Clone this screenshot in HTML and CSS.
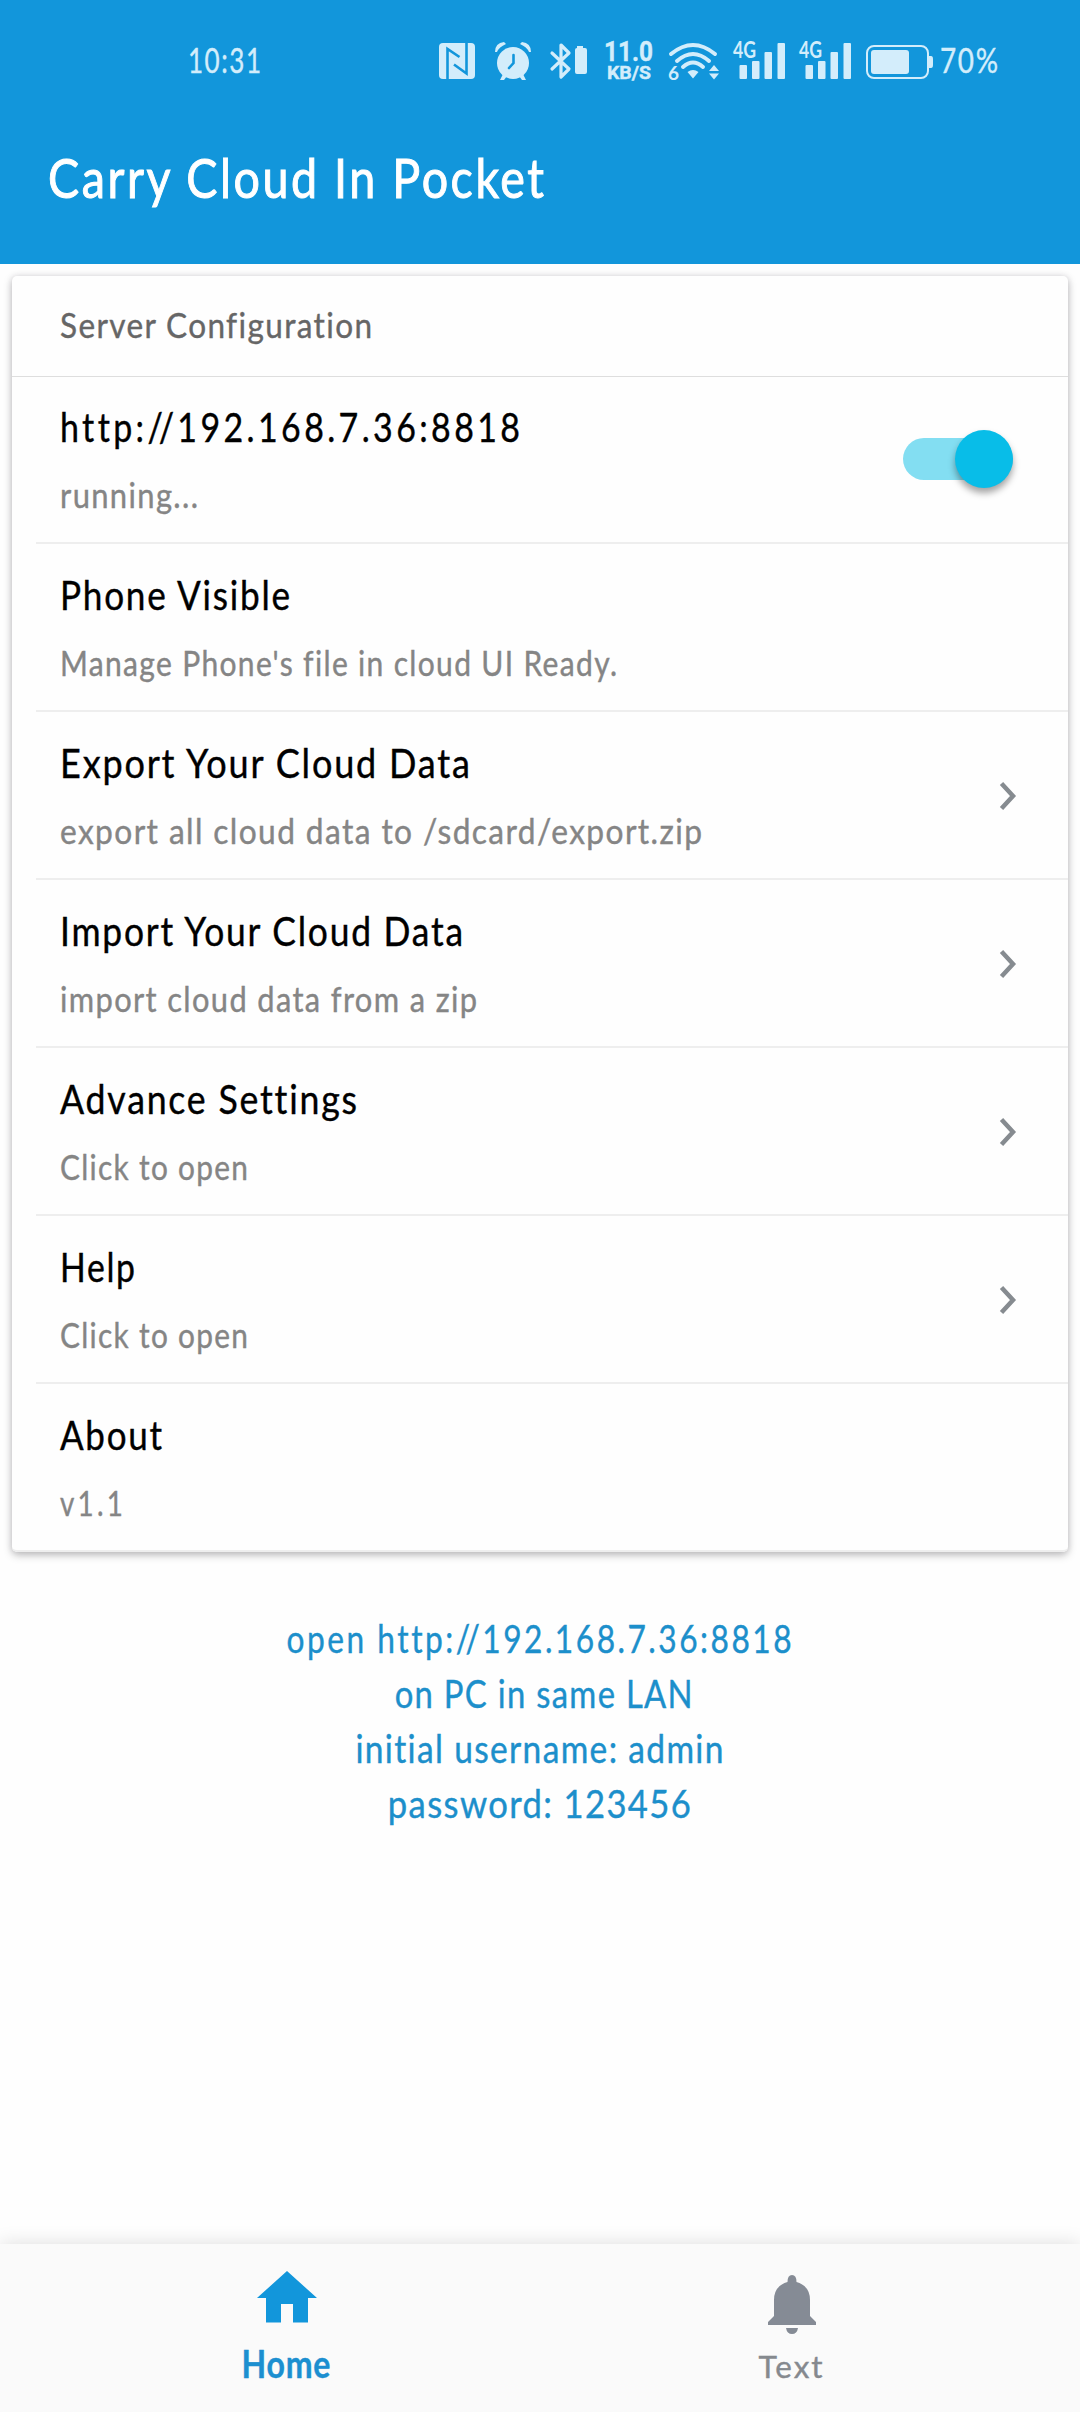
FILE: index.html
```html
<!DOCTYPE html>
<html lang="en">
<head>
<meta charset="utf-8">
<title>Carry Cloud In Pocket</title>
<link rel="stylesheet" href="styles.css">
</head>
<body>
<div class="screen">
  <header class="appbar">
    <div class="status">
      <span class="clock" data-fit="71">10:31</span>
      <div class="status-icons">
        <svg class="nfc" width="36" height="38" viewBox="0 0 36 38"><rect y="1" width="36" height="36" rx="4" fill="currentColor"/><path d="M8.500 37V7L20.500 15M27.500 1V31.500L15 22.500" fill="none" stroke="#1296db" stroke-width="2.600"/></svg>
        <svg class="alarm" width="38" height="38" viewBox="0 0 38 38"><circle cx="19" cy="21" r="16" fill="currentColor"/><path d="M1 10Q1 1 10 0L12 2Q5 5 3 10ZM37 10Q37 1 28 0L26 2Q33 5 35 10ZM9 32L6 38H10L13 34ZM29 32L32 38H28L25 34Z" fill="currentColor"/><path d="M19.500 13V21L15 26" fill="none" stroke="#1296db" stroke-width="2.600" stroke-linecap="round"/></svg>
        <svg class="bluetooth" width="37" height="38" viewBox="0 0 37 38"><path d="M2 11L19 27L11 35V3L19 11L2 27" fill="none" stroke="currentColor" stroke-width="3.200" stroke-linecap="round" stroke-linejoin="round"/><path d="M27 4H33V6H35Q37 6 37 8V30Q37 32 35 32H27Q25 32 25 30V8Q25 6 27 6Z" fill="currentColor"/></svg>
        <div class="speed"><span data-fit="47">11.0</span><small data-fit="42">KB/S</small></div>
        <svg class="wifi" width="52" height="38" viewBox="0 0 52 38"><g fill="none" stroke="currentColor" stroke-width="4" stroke-linecap="round"><path d="M3 12Q25 -6 47 12"/><path d="M9 19Q25 5 41 19"/><path d="M15 25Q25 16 35 25"/></g><path d="M19.500 30Q25 26 30.500 30L25 36.500ZM41 29L46 23L51 29ZM41 31.500H51L46 37.500Z" fill="currentColor"/><text x="0" y="37.500" font-size="19" font-weight="700" fill="currentColor">6</text></svg>
        <svg class="signal" width="52" height="38" viewBox="0 0 52 38"><text x="0" y="16" font-size="22" font-weight="700" textLength="23" lengthAdjust="spacingAndGlyphs" fill="currentColor">4G</text><g fill="currentColor"><rect x="6.500" y="23" width="7.500" height="14" rx="1"/><rect x="19" y="19" width="7.500" height="18" rx="1"/><rect x="31.500" y="10" width="7.500" height="27" rx="1"/><rect x="44.500" y="1" width="7.500" height="36" rx="1"/></g></svg>
        <svg class="signal" width="52" height="38" viewBox="0 0 52 38"><text x="0" y="16" font-size="22" font-weight="700" textLength="23" lengthAdjust="spacingAndGlyphs" fill="currentColor">4G</text><g fill="currentColor"><rect x="6.500" y="23" width="7.500" height="14" rx="1"/><rect x="19" y="19" width="7.500" height="18" rx="1"/><rect x="31.500" y="10" width="7.500" height="27" rx="1"/><rect x="44.500" y="1" width="7.500" height="36" rx="1"/></g></svg>
        <svg class="battery" width="67" height="38" viewBox="0 0 67 38"><rect x="1" y="4" width="61" height="32" rx="7" fill="none" stroke="currentColor" stroke-width="2"/><rect x="5" y="8" width="38" height="24" rx="3" fill="currentColor"/><path d="M63 14H65Q67 14 67 17V23Q67 26 65 26H63Z" fill="currentColor"/></svg>
        <span class="percent" data-fit="56">70%</span>
      </div>
    </div>
    <h1 class="title"><span data-fit="494">Carry Cloud In Pocket</span></h1>
  </header>

  <main class="content">
    <section class="card">
      <h2 class="card-head"><span data-fit="310">Server Configuration</span></h2>
      <div class="row">
        <div class="row-text"><span class="name url" data-fit="458">http://192.168.7.36:8818</span><span class="note" data-fit="136">running...</span></div>
        <div class="switch"><div class="knob"></div></div>
      </div>
      <div class="row">
        <div class="row-text"><span class="name" data-fit="228">Phone Visible</span><span class="note" data-fit="555">Manage Phone's file in cloud UI Ready.</span></div>
      </div>
      <div class="row">
        <div class="row-text"><span class="name" data-fit="408">Export Your Cloud Data</span><span class="note" data-fit="640">export all cloud data to /sdcard/export.zip</span></div>
        <svg class="chevron" width="18" height="30" viewBox="0 0 18 30"><path d="M2.500 3.500L14 16L2.500 28.500" fill="none" stroke="currentColor" stroke-width="4.500"/></svg>
      </div>
      <div class="row">
        <div class="row-text"><span class="name" data-fit="401">Import Your Cloud Data</span><span class="note" data-fit="415">import cloud data from a zip</span></div>
        <svg class="chevron" width="18" height="30" viewBox="0 0 18 30"><path d="M2.500 3.500L14 16L2.500 28.500" fill="none" stroke="currentColor" stroke-width="4.500"/></svg>
      </div>
      <div class="row">
        <div class="row-text"><span class="name" data-fit="295">Advance Settings</span><span class="note" data-fit="186">Click to open</span></div>
        <svg class="chevron" width="18" height="30" viewBox="0 0 18 30"><path d="M2.500 3.500L14 16L2.500 28.500" fill="none" stroke="currentColor" stroke-width="4.500"/></svg>
      </div>
      <div class="row">
        <div class="row-text"><span class="name" data-fit="73">Help</span><span class="note" data-fit="186">Click to open</span></div>
        <svg class="chevron" width="18" height="30" viewBox="0 0 18 30"><path d="M2.500 3.500L14 16L2.500 28.500" fill="none" stroke="currentColor" stroke-width="4.500"/></svg>
      </div>
      <div class="row">
        <div class="row-text"><span class="name" data-fit="100">About</span><span class="note wide" data-fit="61">v1.1</span></div>
      </div>
    </section>

    <div class="hint">
      <span class="url" data-fit="503">open http://192.168.7.36:8818</span>
      <span class="lan" data-fit="296">on PC in same LAN</span>
      <span data-fit="366">initial username: admin</span>
      <span data-fit="301">password: 123456</span>
    </div>
  </main>

  <nav class="tabs">
    <a class="tab active">
      <svg width="60" height="52" viewBox="0 0 60 52"><path d="M30 0L60 27H51V51.500H36V33H24V51.500H9V27H0Z" fill="currentColor"/></svg>
      <span data-fit="87">Home</span>
    </a>
    <a class="tab">
      <svg width="48" height="60" viewBox="0 0 48 60"><path d="M24 0Q28.500 0 28.500 7Q42 11 42 25V41L48 47V50H0V47L6 41V25Q6 11 19.500 7Q19.500 0 24 0ZM18 53H30Q29 59 24 59Q19 59 18 53Z" fill="currentColor"/></svg>
      <span data-fit="62">Text</span>
    </a>
  </nav>
</div>
<script src="fit.js"></script>
</body>
</html>
```
FILE: styles.css
```css
* { box-sizing: border-box; }

body {
  margin: 0;
  font-family: Lato, "Noto Sans", sans-serif;
  font-variant-ligatures: none;
  -webkit-text-stroke: .4px currentColor;
  background: #fefefe;
}

svg { display: block; flex: none; overflow: visible; }

[data-fit] {
  display: inline-block;
  white-space: nowrap;
  transform-origin: left center;
}

.screen {
  width: 1080px;
  height: 2412px;
  display: flex;
  flex-direction: column;
  overflow: hidden;
}

.appbar {
  height: 264px;
  background: #1296db;
  color: #fff;
}

.status {
  height: 122px;
  padding: 42px 83px 0 188px;
  display: flex;
  justify-content: space-between;
  align-items: flex-start;
  color: #d3edfb;
}

.clock, .percent {
  font-size: 34px;
  line-height: 35px;
  letter-spacing: 2px;
}

.clock { width: 71px; }
.percent { width: 57px; margin-left: 7px; }

.status-icons { display: flex; align-items: flex-start; }
.alarm { margin-left: 19px; }
.bluetooth { margin-left: 18px; }
.wifi { margin-left: 15px; }
.signal { margin-left: 14px; }
.wifi + .signal { margin-left: 13px; }
.battery { margin-left: 15px; }

.speed {
  width: 49px;
  margin-left: 17px;
  display: flex;
  flex-direction: column;
  align-items: flex-start;
  font-family: Roboto, sans-serif;
  font-weight: 700;
  font-size: 27px;
  line-height: 21px;
}
.speed small { margin-left: 3px; font-size: 18px; line-height: 19px; }

.title {
  margin: 0;
  padding-left: 48px;
  font-size: 55px;
  font-weight: 400;
  line-height: 110px;
  letter-spacing: 3px;
  -webkit-text-stroke-width: 1px;
}

.content { flex: 1; padding: 12px 12px 0; }

.card {
  background: #fefefe;
  border-radius: 5px;
  box-shadow: 0 3px 8px rgba(0, 0, 0, .26), 0 0 6px rgba(60, 40, 80, .1);
}

.card-head {
  margin: 0;
  height: 101px;
  padding-left: 48px;
  border-bottom: 1px solid #dedede;
  color: #666;
  font-size: 35px;
  font-weight: 400;
  line-height: 96px;
  letter-spacing: 1.5px;
}

.row {
  height: 168px;
  margin-left: 24px;
  padding: 0 51px 0 24px;
  display: flex;
  justify-content: space-between;
  align-items: center;
  border-bottom: 2px solid #eee;
}
.card-head + .row { height: 167px; padding: 0 55px 1px 24px; }
.row:last-child {
  margin-left: 0;
  padding-left: 48px;
  border-radius: 0 0 5px 5px;
}

.row-text {
  display: flex;
  flex-direction: column;
  align-items: flex-start;
  gap: 24px;
}
.name { color: #000; font-size: 40px; line-height: 48px; letter-spacing: 2px; }
.note { color: #858585; font-size: 34px; line-height: 40px; letter-spacing: 1.5px; }
.name.url, .note.wide { letter-spacing: 4px; }

.chevron { color: #868b90; }

.switch {
  width: 110px;
  height: 42px;
  display: flex;
  align-items: center;
  justify-content: flex-end;
  border-radius: 21px;
  background: #83def2;
}
.knob {
  width: 58px;
  height: 58px;
  flex: none;
  border-radius: 50%;
  background: #08bde8;
  box-shadow: 0 5px 7px rgba(0, 0, 0, .36);
}

.hint {
  margin-top: 59px;
  display: flex;
  flex-direction: column;
  align-items: center;
  color: #1c8fcb;
  font-size: 38px;
  line-height: 55px;
  letter-spacing: 1.5px;
}
.hint span { transform-origin: center; }
.hint .url { letter-spacing: 3px; }
.hint .lan { margin-left: 8px; }

.tabs {
  height: 168px;
  display: flex;
  background: #fafafa;
  box-shadow: 0 -1px 18px rgba(0, 0, 0, .12);
  padding: 0 36px 0 34px;
}
.tab {
  flex: 1;
  display: flex;
  flex-direction: column;
  align-items: center;
  padding-top: 31px;
  color: #858b95;
  font-size: 31px;
  line-height: 36px;
  letter-spacing: 2px;
}
.tab span { margin-top: 13px; transform-origin: center; color: #85898e; }
.tab.active { padding-top: 27px; color: #1296db; font-size: 38px; font-weight: 700; line-height: 44px; letter-spacing: 1px; }
.tab.active span { margin-top: 18px; color: #1c8fd0; }
```
FILE: fit.js
```js
document.querySelectorAll('[data-fit]').forEach(function (el) {
  var range = document.createRange();
  range.selectNodeContents(el);
  var natural = range.getBoundingClientRect().width;
  var spacing = parseFloat(getComputedStyle(el).letterSpacing) || 0;
  el.style.transform = 'scaleX(' + (Number(el.dataset.fit) + 2) / (natural - spacing) + ')';
});
```
